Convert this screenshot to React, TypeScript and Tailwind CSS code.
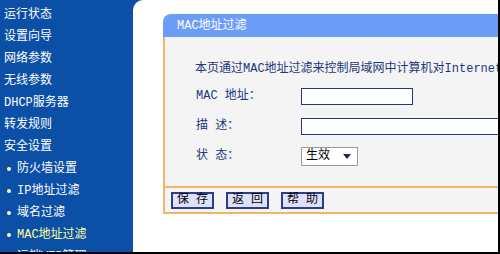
const font = '[font-family:"Liberation_Mono","Noto_Sans_CJK_SC",monospace]';

const menu = [
  { label: "运行状态" },
  { label: "设置向导" },
  { label: "网络参数" },
  { label: "无线参数" },
  { label: "DHCP服务器" },
  { label: "转发规则" },
  { label: "安全设置" },
  { label: "防火墙设置", sub: true },
  { label: "IP地址过滤", sub: true },
  { label: "域名过滤", sub: true },
  { label: "MAC地址过滤", sub: true, active: true },
  { label: "远端WEB管理", sub: true },
];

function Sidebar() {
  return (
    <div className="flex w-[133px] shrink-0 flex-col pt-[4px]">
      {menu.map((m) => (
        <div
          key={m.label}
          className={`flex h-[22px] shrink-0 items-center whitespace-nowrap text-[12px] leading-none ${
            m.sub ? "pl-[7px]" : "pl-[4px]"
          } ${m.active ? "text-[#ffff99]" : "text-white"}`}
        >
          {m.sub && (
            <span className="mr-[6px] h-[4px] w-[4px] rounded-full bg-[#ffffcc]" />
          )}
          {m.label}
        </div>
      ))}
    </div>
  );
}

function Row({ label, children }: { label: string; children: React.ReactNode }) {
  return (
    <div className="flex h-[30px] items-center">
      <div className="w-[106px] shrink-0 pl-[1px] text-[12px] text-[#1d3680]">{label}</div>
      {children}
    </div>
  );
}

export default function App() {
  return (
    <div
      className={`flex h-[254px] w-[500px] overflow-hidden border-r-2 border-b-2 border-black bg-[#0b4fa6] ${font}`}
    >
      <Sidebar />
      <div className="flex-1 overflow-hidden rounded-tl-[10px] bg-white pt-[14px] pl-[30px]">
        <div className="w-[345px]">
          <div className="flex h-[23px] items-center rounded-tl-[8px] bg-[#6b9cf8] pl-[14px] text-[12px] text-white">
            MAC地址过滤
          </div>
          <div className="flex h-[151px] flex-col border-b-2 border-l-2 border-[#f3b46a] bg-[#f4f4f4] pl-[30px] pt-[20px]">
            <div className="flex h-[24px] items-center whitespace-nowrap text-[12px] text-[#1d3680]">
              本页通过MAC地址过滤来控制局域网中计算机对Internet的访问。
            </div>
            <Row label="MAC 地址：">
              <div className="h-[17px] w-[112px] border border-[#23397d] bg-white" />
            </Row>
            <Row label="描 述：">
              <div className="h-[17px] w-[240px] border border-[#23397d] bg-white" />
            </Row>
            <Row label="状 态：">
              <div className="flex h-[19px] w-[57px] items-center justify-between border border-[#9a9a9a] bg-white pl-[4px] pr-[6px] text-[12px] text-black">
                <span>生效</span>
                <svg width="8" height="5" viewBox="0 0 8 5">
                  <path d="M0 0h8L4 5z" fill="#1b2a5a" />
                </svg>
              </div>
            </Row>
          </div>
          <div className="flex h-[26px] items-center gap-[12px] border-b-2 border-l-2 border-[#f3b46a] bg-[#f4f4f4] pl-[6px]">
            {["保 存", "返 回", "帮 助"].map((b) => (
              <button
                key={b}
                className="flex h-[17px] w-[43px] items-center justify-center border-2 border-[#2a3f8a] bg-[#dfe1fb] text-[12px] leading-none text-black"
              >
                {b}
              </button>
            ))}
          </div>
        </div>
      </div>
    </div>
  );
}
